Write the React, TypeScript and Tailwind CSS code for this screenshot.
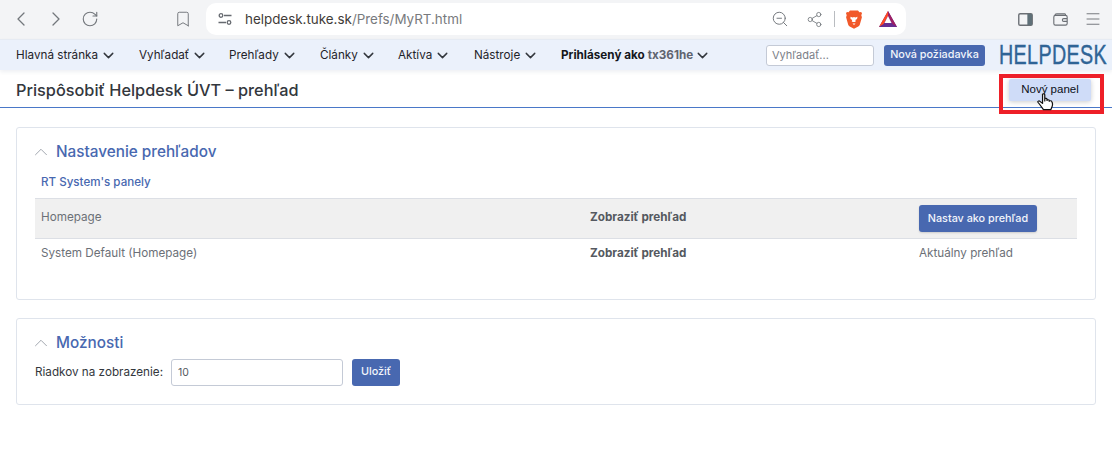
import { Bookmark, ChevronDown, ChevronLeft, ChevronRight, ChevronUp, Menu, RotateCw, Share2, ZoomOut } from "lucide-react";

const navItems = [
  { label: "Hlavná stránka", width: "w-[123px]" },
  { label: "Vyhľadať", width: "w-[90px]" },
  { label: "Prehľady", width: "w-[91px]" },
  { label: "Články", width: "w-[78px]" },
  { label: "Aktíva", width: "w-[76px]" },
  { label: "Nástroje", width: "w-[87px]" },
];

function SiteSettingsIcon() {
  return (
    <svg width="16" height="16" viewBox="0 0 16 16" fill="none" stroke="#666a70" strokeWidth="1.3">
      <circle cx="4" cy="4.5" r="1.8" />
      <path d="M7 4.5h7.5M1.5 11.5H9" />
      <circle cx="12" cy="11.5" r="1.8" />
    </svg>
  );
}

function BraveIcon() {
  return (
    <svg width="16" height="19" viewBox="0 0 18 21">
      <path d="M4.500 0.500h9l1.600 1.900 1.900-.3 1 1.400-.8 2.200.7 2.300-2.400 8.300c-.3 1-.9 1.600-1.700 2.100L9 21l-4.800-2.600c-.8-.5-1.400-1.100-1.700-2.100L.1 8l.7-2.300L0 3.500l1-1.400 1.900.3z" fill="#f1592a" />
      <path d="M5 7.500l2.500.8L9 7.600l1.500.7 2.500-.8-.6 2.400-1.900 1.200.6 1.300-1.100 1H7.500l-1.100-1 .6-1.300-1.900-1.200z" fill="#ffffff" />
      <path d="M7.300 15h3.400L9 16.600z" fill="#ffffff" />
    </svg>
  );
}

function BatIcon() {
  return (
    <svg width="18" height="16" viewBox="0 0 18 16">
      <path d="M9 0L0 16h18z" fill="#662d91" />
      <path d="M9 0L0 16l4.500-2.700L9 5z" fill="#ff4724" />
      <path d="M9 0v5l4.500 8.300L18 16z" fill="#9e1f63" />
      <path d="M4.500 13.300h9L18 16H0z" fill="#662d91" />
      <path d="M9 5l-3.500 7h7z" fill="#ffffff" />
    </svg>
  );
}

function SidebarIcon() {
  return (
    <svg width="15" height="13" viewBox="0 0 16 14">
      <rect x="0.750" y="0.750" width="14.500" height="12.500" rx="1.500" fill="none" stroke="#6b6f75" strokeWidth="1.500" />
      <rect x="10" y="1" width="5" height="12" fill="#5f7078" />
    </svg>
  );
}

function WalletIcon() {
  return (
    <svg width="15" height="13" viewBox="0 0 16 14" fill="none" stroke="#6b6f75" strokeWidth="1.200">
      <path d="M2 2.500C2 1.500 3 1 4 1h8.500c.8 0 1 .6 1 1.500" />
      <rect x="0.800" y="2.500" width="14.400" height="10.500" rx="1.800" />
      <path d="M15 6h-3.500a1.500 1.500 0 000 3H15" />
    </svg>
  );
}

function HandCursor() {
  return (
    <svg width="20" height="19" viewBox="0 0 18 20" preserveAspectRatio="none">
      <path
        d="M5 1.800c0-1.300 2-1.300 2 0V8.500l0-2c0-1.200 2-1.200 2 0v1.500c0-1.100 2-1.100 2 0v.8c0-1 2-1 2.200.1l.5 1.100c.5 1.800.3 3.700-.6 5.500l-.6 2H5.800l-3-4.800L.9 9.800c-.6-1 .8-2 1.700-1.100L5 11z"
        fill="#ffffff"
        stroke="#111111"
        strokeWidth="1.100"
        strokeLinejoin="round"
      />
    </svg>
  );
}

function BrowserBar() {
  return (
    <div className="flex h-[39px] items-start bg-[#f3f4f6] text-[#73777c]">
      <div className="flex h-[38px] w-[174px] items-center">
        <ChevronLeft size={24} strokeWidth={1.300} className="ml-[9px]" />
        <ChevronRight size={24} strokeWidth={1.300} className="ml-[11px]" />
        <RotateCw size={18} strokeWidth={1.500} className="ml-[13px]" />
      </div>
      <div className="flex h-[38px] w-[32px] items-center">
        <Bookmark size={18} strokeWidth={1.300} />
      </div>
      <div className="mt-[3px] flex h-[32px] w-[700px] items-center rounded-[10px] bg-white">
        <div className="ml-[11px]">
          <SiteSettingsIcon />
        </div>
        <div className="ml-[12px] text-[13.400px] text-[#3f3b38]">
          helpdesk.tuke.sk<span className="text-[#787a7d]">/Prefs/MyRT.html</span>
        </div>
        <div className="ml-auto flex items-center">
          <ZoomOut size={18} strokeWidth={1.300} />
          <Share2 size={17} strokeWidth={1.200} className="ml-[17px]" />
          <div className="ml-[11px] h-[16px] w-px bg-[#b9bcc0]" />
          <div className="ml-[11px] flex items-center">
            <BraveIcon />
          </div>
          <div className="ml-[17px] mr-[9px] flex items-center">
            <BatIcon />
          </div>
        </div>
      </div>
      <div className="flex h-[38px] flex-1 items-center pl-[112px]">
        <SidebarIcon />
        <div className="ml-[20px] flex items-center">
          <WalletIcon />
        </div>
        <Menu size={18} strokeWidth={1.300} className="ml-[16px]" />
      </div>
    </div>
  );
}

function NavBar() {
  return (
    <div className="flex h-[31px] items-center border-t border-[#e6ebf3] bg-[#ebf1fb] pl-[16px] text-[11.700px] text-[#1f2329] shadow-[0_2px_4px_rgba(40,60,100,0.08)]">
      {navItems.map((item) => (
        <div key={item.label} className={`flex items-center pt-[1px] ${item.width}`}>
          {item.label}
          <ChevronDown size={17} strokeWidth={2} className="ml-[2px] text-[#33373d]" />
        </div>
      ))}
      <div className="flex w-[205px] items-center pt-[1px] font-bold text-[#14171c]">
        Prihlásený ako<span className="ml-[3px] text-[#5f6470]">tx361he</span>
        <ChevronDown size={17} strokeWidth={2} className="ml-[1px] text-[#33373d]" />
      </div>
      <div className="flex h-[21px] w-[108px] items-center rounded-[3px] border border-[#c4cad6] bg-white pl-[5px] text-[11px] text-[#7b8088]">
        Vyhľadať...
      </div>
      <div className="ml-[10px] flex h-[21px] w-[101px] items-center justify-center rounded-[3px] bg-[#4868b0] text-[10.800px] font-medium text-[#f2f5fb]">
        Nová požiadavka
      </div>
      <div className="ml-[14px] w-[110px] origin-left scale-x-[0.73] whitespace-nowrap font-['Liberation_Sans',sans-serif] text-[27px] leading-none tracking-[0.5px] text-[#2f6496] [-webkit-text-stroke:0.4px_#2f6496]">
        HELPDESK
      </div>
    </div>
  );
}

function PageHeader() {
  return (
    <div className="relative">
      <div className="flex h-[37px] items-center justify-between pl-[16px] pr-[21px] pt-[3px]">
        <div className="pt-[1px] text-[16.300px] font-medium text-[#33373d]">Prispôsobiť Helpdesk ÚVT – prehľad</div>
        <div className="flex h-[22px] w-[82px] items-center justify-center rounded-[2px] bg-[#cfdcf8] font-['Liberation_Sans',sans-serif] text-[11.500px] font-medium text-[#0b0f17] shadow-[0_1px_5px_rgba(0,0,0,0.2)]">
          Nový panel
        </div>
      </div>
      <div className="h-px bg-[#4a78c8]" />
      <div className="absolute left-[999px] top-[4px] h-[40px] w-[105px] border-[4px] border-[#ee2028]" />
      <div className="absolute left-[1037px] top-[23px]">
        <HandCursor />
      </div>
    </div>
  );
}

function PanelTitle({ children }: { children: string }) {
  return (
    <div className="flex h-[24px] items-center">
      <ChevronUp size={22} strokeWidth={1} className="-ml-[5px] text-[#9aa0a8]" />
      <div className="ml-[4px] text-[15.300px] font-medium text-[#4868b0]">{children}</div>
    </div>
  );
}

export default function App() {
  return (
    <div className="h-[450px] w-[1112px] overflow-hidden bg-white font-['Inter',sans-serif]">
      <BrowserBar />
      <NavBar />
      <PageHeader />
      <div className="flex flex-col gap-[18px] px-[16px] pt-[19px]">
        <section className="h-[173px] rounded-[3px] border border-[#dfe4ec] px-[18px] pt-[12px]">
          <PanelTitle>Nastavenie prehľadov</PanelTitle>
          <div className="mt-[10px] pl-[6px] text-[11.600px] font-medium text-[#4868b0]">RT System's panely</div>
          <div className="mt-[7px] flex h-[41px] items-center border-y border-[#dcdfe5] bg-[#f0f0f0] pl-[6px] text-[11.700px] text-[#6c7077]">
            <div className="w-[549px] pb-[2px]">Homepage</div>
            <div className="w-[329px] pb-[2px] font-bold text-[#555960]">Zobraziť prehľad</div>
            <div className="flex h-[27px] w-[118px] items-center justify-center rounded-[3px] bg-[#4868b0] text-[10.800px] font-medium text-[#f2f5fb] shadow-[0_1px_2px_rgba(0,0,0,0.15)]">
              Nastav ako prehľad
            </div>
          </div>
          <div className="flex h-[29px] items-center pl-[6px] text-[11.700px] text-[#6c7077]">
            <div className="w-[549px]">System Default (Homepage)</div>
            <div className="w-[329px] font-bold text-[#555960]">Zobraziť prehľad</div>
            <div>Aktuálny prehľad</div>
          </div>
        </section>
        <section className="h-[87px] rounded-[3px] border border-[#dfe4ec] px-[18px] pt-[12px]">
          <PanelTitle>Možnosti</PanelTitle>
          <div className="mt-[4px] flex items-center text-[11.700px] text-[#33373d]">
            <div className="w-[136px]">Riadkov na zobrazenie:</div>
            <div className="flex h-[27px] w-[172px] items-center rounded-[3px] border border-[#c4cad6] pl-[6px] text-[10.500px] text-[#555960]">10</div>
            <div className="ml-[9px] flex h-[27px] w-[48px] items-center justify-center rounded-[3px] bg-[#4868b0] text-[10.800px] font-medium text-[#f2f5fb]">
              Uložiť
            </div>
          </div>
        </section>
      </div>
    </div>
  );
}
